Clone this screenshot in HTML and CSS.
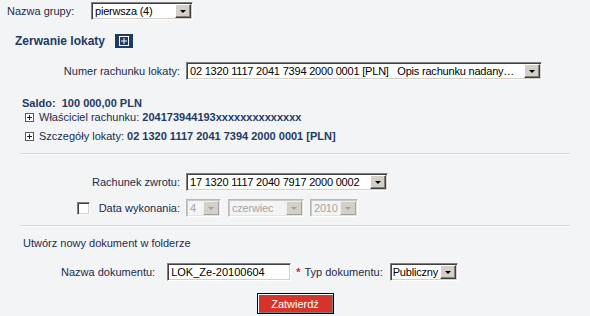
FILE: index.html
```html
<!DOCTYPE html>
<html lang="pl">
<head>
  <meta charset="UTF-8">
  <meta name="viewport" content="width=device-width, initial-scale=1.0">
  <title>Zerwanie lokaty</title>
  <link rel="stylesheet" href="styles.css">
</head>
<body>

  <div class="group-row">
    <span class="group-label">Nazwa grupy:</span>
    <div class="combo combo-group">
      <span class="combo-value">pierwsza (4)</span>
      <span class="combo-arrow"></span>
    </div>
  </div>

  <h2 class="section-title">
    Zerwanie lokaty
    <span class="expand-box">
      <svg width="18" height="14" viewBox="0 0 18 14">
        <rect x="4.5" y="2.5" width="9" height="9" fill="none" stroke="#fff" stroke-width="1"/>
        <path d="M6 7h6M9 4v6" stroke="#fff" stroke-width="1"/>
      </svg>
    </span>
  </h2>

  <div class="fields fields-top">
    <span class="field-label">Numer rachunku lokaty:</span>
    <div class="combo combo-account">
      <span class="combo-value">02 1320 1117 2041 7394 2000 0001 [PLN]&nbsp;&nbsp;&nbsp;Opis rachunku nadany…</span>
      <span class="combo-arrow"></span>
    </div>
  </div>

  <div class="saldo">Saldo:&nbsp; 100 000,00 PLN</div>

  <ul class="details">
    <li>
      <span class="plus-icon"><svg width="9" height="9" viewBox="0 0 9 9">
          <rect x="0.5" y="0.5" width="8" height="8" fill="#fff" stroke="#5a5a5a"/>
          <path d="M2 4.5h5M4.5 2v5" stroke="#222"/>
        </svg></span>Właściciel rachunku: <b>204173944193xxxxxxxxxxxxxx</b>
    </li>
    <li>
      <span class="plus-icon"><svg width="9" height="9" viewBox="0 0 9 9">
          <rect x="0.5" y="0.5" width="8" height="8" fill="#fff" stroke="#5a5a5a"/>
          <path d="M2 4.5h5M4.5 2v5" stroke="#222"/>
        </svg></span>Szczegóły lokaty: <b>02 1320 1117 2041 7394 2000 0001 [PLN]</b>
    </li>
  </ul>

  <hr class="separator">

  <div class="fields fields-return">
    <span class="field-label">Rachunek zwrotu:</span>
    <div class="combo combo-return">
      <span class="combo-value">17 1320 1117 2040 7917 2000 0002</span>
      <span class="combo-arrow"></span>
    </div>

    <span class="field-label">
      <span class="checkbox"></span>
      Data wykonania:
    </span>
    <div class="date-combos">
      <div class="combo combo-disabled combo-day">
        <span class="combo-value">4</span>
        <span class="combo-arrow"></span>
      </div>
      <div class="combo combo-disabled combo-month">
        <span class="combo-value">czerwiec</span>
        <span class="combo-arrow"></span>
      </div>
      <div class="combo combo-disabled combo-year">
        <span class="combo-value">2010</span>
        <span class="combo-arrow"></span>
      </div>
    </div>
  </div>

  <hr class="separator separator-bottom">

  <div class="doc-title">Utwórz nowy dokument w folderze</div>

  <div class="doc-row">
    <span class="doc-label">Nazwa dokumentu:</span>
    <span class="text-input">LOK_Ze-20100604</span>
    <span class="required">*</span>
    <span class="doc-label doc-label-type">Typ dokumentu:</span>
    <div class="combo combo-type">
      <span class="combo-value">Publiczny</span>
      <span class="combo-arrow"></span>
    </div>
  </div>

  <div class="actions">
    <button class="submit-button">Zatwierdź</button>
  </div>

</body>
</html>
```

FILE: styles.css
```css
body {
  margin: 0;
  padding: 2px 0 0 0;
  background: #f3f4f6;
  font-family: 'Liberation Sans', Arial, sans-serif;
  font-size: 11px;
  color: #1d2b4a;
}

/* --- combo boxes (windows classic look) --- */

.combo {
  box-sizing: border-box;
  height: 18px;
  display: flex;
  align-items: center;
  background: #fff;
  border-top: 1px solid #808080;
  border-left: 1px solid #808080;
  border-right: 1px solid #fff;
  border-bottom: 1px solid #fff;
  box-shadow: inset 1px 1px 0 #404040, inset -1px -1px 0 #d4d0c8;
  padding: 1px;
  color: #000;
}

.combo-value {
  flex: 1;
  min-width: 0;
  padding-left: 2px;
  white-space: nowrap;
  overflow: hidden;
  line-height: 14px;
  letter-spacing: -0.2px;
}

.combo-arrow {
  box-sizing: border-box;
  width: 16px;
  height: 14px;
  flex: none;
  background: #d4d0c8;
  border-top: 1px solid #fff;
  border-left: 1px solid #fff;
  border-right: 1px solid #404040;
  border-bottom: 1px solid #404040;
  box-shadow: inset -1px -1px 0 #808080;
  display: flex;
  align-items: center;
  justify-content: center;
}

.combo-arrow::after {
  content: "";
  border-left: 3px solid transparent;
  border-right: 3px solid transparent;
  border-top: 3px solid #000;
  margin-top: 1px;
}

.combo-disabled {
  background: #f4f4f4;
  border-top-color: #b8b8b8;
  border-left-color: #b8b8b8;
  box-shadow: inset 1px 1px 0 #c8c8c8, inset -1px -1px 0 #e4e4e4;
  color: #a4a4a4;
}

.combo-disabled .combo-arrow {
  border-top-color: #f0f0f0;
  border-left-color: #f0f0f0;
  border-right-color: #a0a0a0;
  border-bottom-color: #a0a0a0;
  box-shadow: none;
}

.combo-disabled .combo-arrow::after {
  border-top-color: #a0a0a0;
}

/* --- top group --- */

.group-row {
  display: flex;
  align-items: center;
  padding-left: 7px;
  height: 18px;
}

.group-label {
  width: 84px;
}

.combo-group {
  width: 102px;
}

.section-title {
  margin: 12px 0 0 15px;
  height: 18px;
  display: flex;
  align-items: center;
  font-size: 12px;
  font-weight: bold;
  color: #223a62;
}

.expand-box {
  display: flex;
  width: 18px;
  height: 14px;
  margin-left: 10px;
  background: #1f3a63;
}

/* --- label / control grid --- */

.fields {
  display: grid;
  grid-template-columns: 180px auto;
  column-gap: 6px;
  row-gap: 8px;
  align-items: center;
  justify-items: start;
}

.fields-top {
  margin-top: 12px;
}

.fields-return {
  margin-top: 18px;
}

.field-label {
  justify-self: end;
  display: flex;
  align-items: center;
}

.combo-account {
  width: 356px;
}

.combo-return {
  width: 202px;
}

.date-combos {
  display: flex;
  gap: 7px;
}

.combo-day {
  width: 35px;
}

.combo-month {
  width: 76px;
}

.combo-year {
  width: 48px;
  margin-left: -1px;
}

.checkbox {
  box-sizing: border-box;
  width: 13px;
  height: 13px;
  margin-right: 9px;
  background: #fff;
  border-top: 1px solid #808080;
  border-left: 1px solid #808080;
  border-right: 1px solid #fff;
  border-bottom: 1px solid #fff;
  box-shadow: inset 1px 1px 0 #404040, inset -1px -1px 0 #d4d0c8;
}

/* --- saldo and details --- */

.saldo {
  margin: 17px 0 0 22px;
  line-height: 13px;
  font-weight: bold;
  color: #223a62;
}

.details {
  list-style: none;
  margin: 0;
  padding: 0 0 0 25px;
}

.details li {
  height: 14px;
  line-height: 14px;
  margin-top: 5px;
  white-space: nowrap;
}

.details li:first-child {
  margin-top: 0;
}

.details b {
  color: #223a62;
}

.plus-icon {
  display: inline-block;
  width: 9px;
  height: 9px;
  margin-right: 5px;
  vertical-align: -1px;
}

.plus-icon svg {
  display: block;
}

.separator {
  margin: 10px 20px 0 20px;
  border: 0;
  border-top: 1px solid #d6d6d6;
  border-bottom: 1px solid #fff;
  height: 0;
}

.separator-bottom {
  margin-top: 8px;
}

/* --- document --- */

.doc-title {
  margin: 9px 0 0 23px;
  line-height: 14px;
}

.doc-row {
  display: flex;
  align-items: center;
  margin-top: 13px;
  padding-left: 61px;
  height: 18px;
}

.doc-label {
  margin-right: 12px;
}

.doc-label-type {
  margin-right: 7px;
}

.text-input {
  box-sizing: border-box;
  width: 124px;
  height: 18px;
  padding: 1px 3px;
  line-height: 14px;
  background: #fff;
  color: #000;
  border-top: 1px solid #808080;
  border-left: 1px solid #808080;
  border-right: 1px solid #fff;
  border-bottom: 1px solid #fff;
  box-shadow: inset 1px 1px 0 #404040, inset -1px -1px 0 #d4d0c8;
}

.required {
  color: #d7261e;
  margin: 0 4px 0 5px;
  font-weight: bold;
}

.combo-type {
  width: 68px;
}

.combo-type .combo-value {
  padding-left: 1px;
}

.actions {
  display: flex;
  justify-content: center;
  margin-top: 12px;
}

.submit-button {
  box-sizing: border-box;
  width: 77px;
  height: 21px;
  padding: 0;
  background: #d8332a;
  color: #fff;
  font-family: 'Liberation Sans', Arial, sans-serif;
  font-size: 11px;
  border: 1px solid #000;
  box-shadow: inset 1px 1px 0 #fff, inset -1px -1px 0 #808080;
  cursor: pointer;
}
```
